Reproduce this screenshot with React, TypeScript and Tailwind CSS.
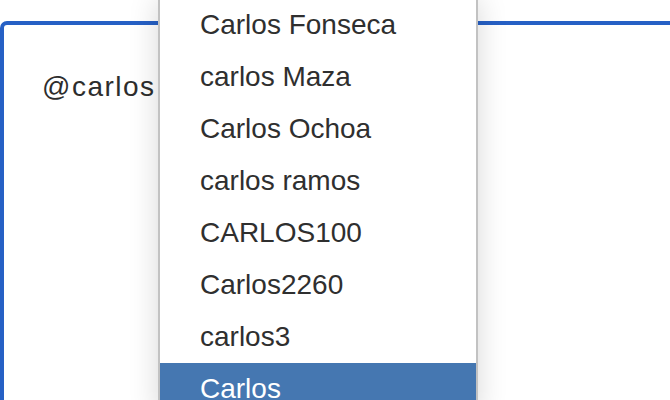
const names = [
  "Carlos Fonseca",
  "carlos Maza",
  "Carlos Ochoa",
  "carlos ramos",
  "CARLOS100",
  "Carlos2260",
  "carlos3",
  "Carlos",
];

//component
export default function App() {
  const active = 7; // highlighted suggestion

  return (
    <div className="relative w-[670px] h-[400px] overflow-hidden bg-white font-['Liberation_Sans',Arial,sans-serif]">
      {/* editor box */}
      <div className="mt-[21px] w-[700px] h-[420px] border-4 border-[#2660c5] rounded-tl-[7px] pl-[38px] pt-[36px]">
        <p className="text-[28px] leading-[52px] tracking-[1.5px] text-[#2d2d2d]">@carlos</p>
      </div>

      {/* mention suggestions */}
      <ul className="absolute top-[-1px] left-[158px] w-[320px] bg-white border-x-2 border-[#c2c2c2] shadow-[0_0_28px_rgba(0,0,0,0.16)]">
        {names.map((name, index) => (
          <li
            key={index}
            className={
              index === active
                ? "h-[52px] pl-[40px] text-[28px] leading-[52px] bg-[#4577b1] text-white"
                : "h-[52px] pl-[40px] text-[28px] leading-[52px] text-[#2f2f2f]"
            }
          >
            {name}
          </li>
        ))}
      </ul>
    </div>
  );
}
